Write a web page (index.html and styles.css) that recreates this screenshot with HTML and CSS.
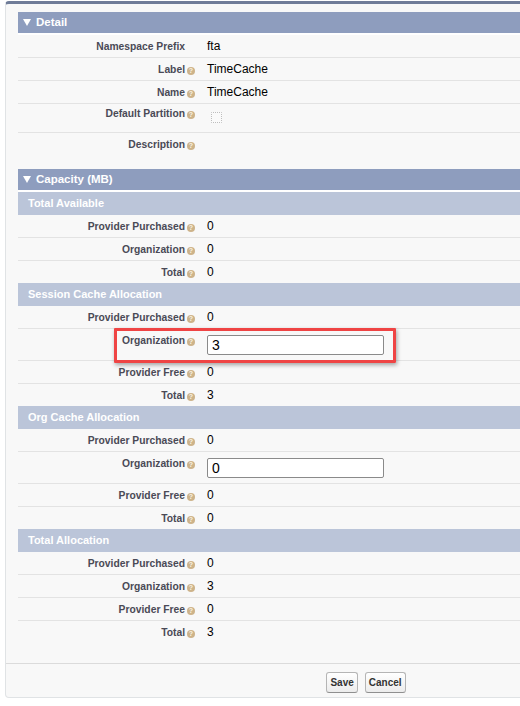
FILE: index.html
```html
<!DOCTYPE html>
<html>
<head>
<meta charset="utf-8">
<link rel="stylesheet" href="styles.css">
</head>
<body>
<div class="panel">
  <div class="panel-body">
    <div class="section detail">
      <div class="sec-head"><span class="tri"></span>Detail</div>
      <div class="rows">
        <div class="row"><div class="lbl">Namespace Prefix<span class="help none"></span></div><div class="val">fta</div></div>
        <div class="row"><div class="lbl">Label<span class="help">?</span></div><div class="val">TimeCache</div></div>
        <div class="row"><div class="lbl">Name<span class="help">?</span></div><div class="val">TimeCache</div></div>
        <div class="row row-check"><div class="lbl">Default Partition<span class="help">?</span></div><div class="val"><span class="checkbox"></span></div></div>
        <div class="row"><div class="lbl">Description<span class="help">?</span></div><div class="val"></div></div>
      </div>
    </div>

    <div class="section capacity">
      <div class="sec-head"><span class="tri"></span>Capacity (MB)</div>

      <div class="sub-head">Total Available</div>
      <div class="rows">
        <div class="row"><div class="lbl">Provider Purchased<span class="help">?</span></div><div class="val">0</div></div>
        <div class="row"><div class="lbl">Organization<span class="help">?</span></div><div class="val">0</div></div>
        <div class="row"><div class="lbl">Total<span class="help">?</span></div><div class="val">0</div></div>
      </div>

      <div class="sub-head">Session Cache Allocation</div>
      <div class="rows">
        <div class="row"><div class="lbl">Provider Purchased<span class="help">?</span></div><div class="val">0</div></div>
        <div class="row row-input">
          <div class="lbl">Organization<span class="help">?</span></div>
          <div class="val"><input class="num" type="text" value="3"></div>
          <div class="highlight"></div>
        </div>
        <div class="row"><div class="lbl">Provider Free<span class="help">?</span></div><div class="val">0</div></div>
        <div class="row"><div class="lbl">Total<span class="help">?</span></div><div class="val">3</div></div>
      </div>

      <div class="sub-head">Org Cache Allocation</div>
      <div class="rows">
        <div class="row"><div class="lbl">Provider Purchased<span class="help">?</span></div><div class="val">0</div></div>
        <div class="row row-input">
          <div class="lbl">Organization<span class="help">?</span></div>
          <div class="val"><input class="num" type="text" value="0"></div>
        </div>
        <div class="row"><div class="lbl">Provider Free<span class="help">?</span></div><div class="val">0</div></div>
        <div class="row"><div class="lbl">Total<span class="help">?</span></div><div class="val">0</div></div>
      </div>

      <div class="sub-head">Total Allocation</div>
      <div class="rows">
        <div class="row"><div class="lbl">Provider Purchased<span class="help">?</span></div><div class="val">0</div></div>
        <div class="row"><div class="lbl">Organization<span class="help">?</span></div><div class="val">3</div></div>
        <div class="row"><div class="lbl">Provider Free<span class="help">?</span></div><div class="val">0</div></div>
        <div class="row"><div class="lbl">Total<span class="help">?</span></div><div class="val">3</div></div>
      </div>
    </div>
  </div>
  <div class="footer">
    <button class="btn">Save</button>
    <button class="btn">Cancel</button>
  </div>
</div>
</body>
</html>
```
FILE: styles.css
```css
html, body {
  margin: 0;
  padding: 0;
  overflow: hidden;
  background: #ffffff;
  font-family: "Liberation Sans", Arial, sans-serif;
}

.panel {
  box-sizing: border-box;
  width: 722px;
  margin: 1px 0 0 5px;
  background: #f8f8f8;
  border: 1px solid #e0e3e5;
  border-top: 3px solid #6f7c98;
  border-radius: 4px;
}

.panel-body {
  padding: 8px 12px 20px 12px;
}

.section.detail {
  margin-bottom: 14px;
}

.sec-head {
  height: 21px;
  line-height: 21px;
  background: #8e9dbe;
  color: #ffffff;
  font-weight: bold;
  font-size: 11.5px;
  padding-left: 5px;
  border-bottom: 2px solid #ffffff;
  display: flex;
  align-items: center;
}

.tri {
  width: 0;
  height: 0;
  border-left: 4px solid transparent;
  border-right: 4px solid transparent;
  border-top: 7px solid #ffffff;
  margin-right: 5px;
}

.sub-head {
  height: 23px;
  line-height: 23px;
  background: #bbc5d9;
  color: #ffffff;
  font-weight: bold;
  font-size: 11px;
  padding-left: 10px;
}

.row {
  position: relative;
  display: grid;
  grid-template-columns: 189px 1fr;
  min-height: 22px;
  border-bottom: 1px solid #e3e3e3;
}

.rows .row:last-child {
  border-bottom: none;
}

.lbl {
  text-align: right;
  padding: 5px 12px 0 0;
  font-size: 10.3px;
  line-height: 13px;
  font-weight: bold;
  color: #4a4a56;
}

.val {
  padding-top: 4px;
  font-size: 12px;
  line-height: 14px;
  color: #000000;
}

.help {
  display: inline-block;
  width: 8px;
  height: 8px;
  margin-left: 2px;
  border-radius: 50%;
  background: #cdb38a;
  color: #fbf3e2;
  font-size: 7px;
  line-height: 8px;
  text-align: center;
  vertical-align: 0;
  font-weight: bold;
}

.help.none {
  visibility: hidden;
}

.row-check {
  min-height: 28px;
}

.row-check .lbl {
  padding-top: 3px;
}

.row-check .val {
  padding-top: 8px;
  padding-left: 4px;
}

.checkbox {
  display: block;
  box-sizing: border-box;
  width: 11px;
  height: 11px;
  border: 1px dotted #bdbdbd;
  border-radius: 1px;
  background: #fafafa;
}

.row-input {
  min-height: 31px;
}

.row-input .val {
  padding-top: 6px;
}

.num {
  box-sizing: border-box;
  display: block;
  width: 177px;
  height: 20px;
  margin: 0;
  padding: 0 4px;
  border: 1px solid #8a8a8a;
  border-radius: 2px;
  background: #ffffff;
  font-family: "Liberation Sans", Arial, sans-serif;
  font-size: 14px;
  color: #000000;
}

.highlight {
  position: absolute;
  left: 96px;
  top: -1px;
  width: 282px;
  height: 35px;
  box-sizing: border-box;
  border: 3px solid #ef4444;
  border-radius: 1px;
  box-shadow: 1px 2px 4px rgba(0, 0, 0, 0.35);
  pointer-events: none;
}

.footer {
  border-top: 1px solid #dbdbdb;
  padding: 8px 0 4px;
  display: flex;
  justify-content: center;
  gap: 7px;
}

.btn {
  height: 21px;
  padding: 0 3px;
  margin: 0;
  font-family: "Liberation Sans", Arial, sans-serif;
  font-size: 10px;
  font-weight: bold;
  color: #333333;
  background: linear-gradient(#ffffff, #ececec);
  border: 1px solid #b5b5b5;
  border-bottom-color: #8f8f8f;
  border-radius: 3px;
}
```
